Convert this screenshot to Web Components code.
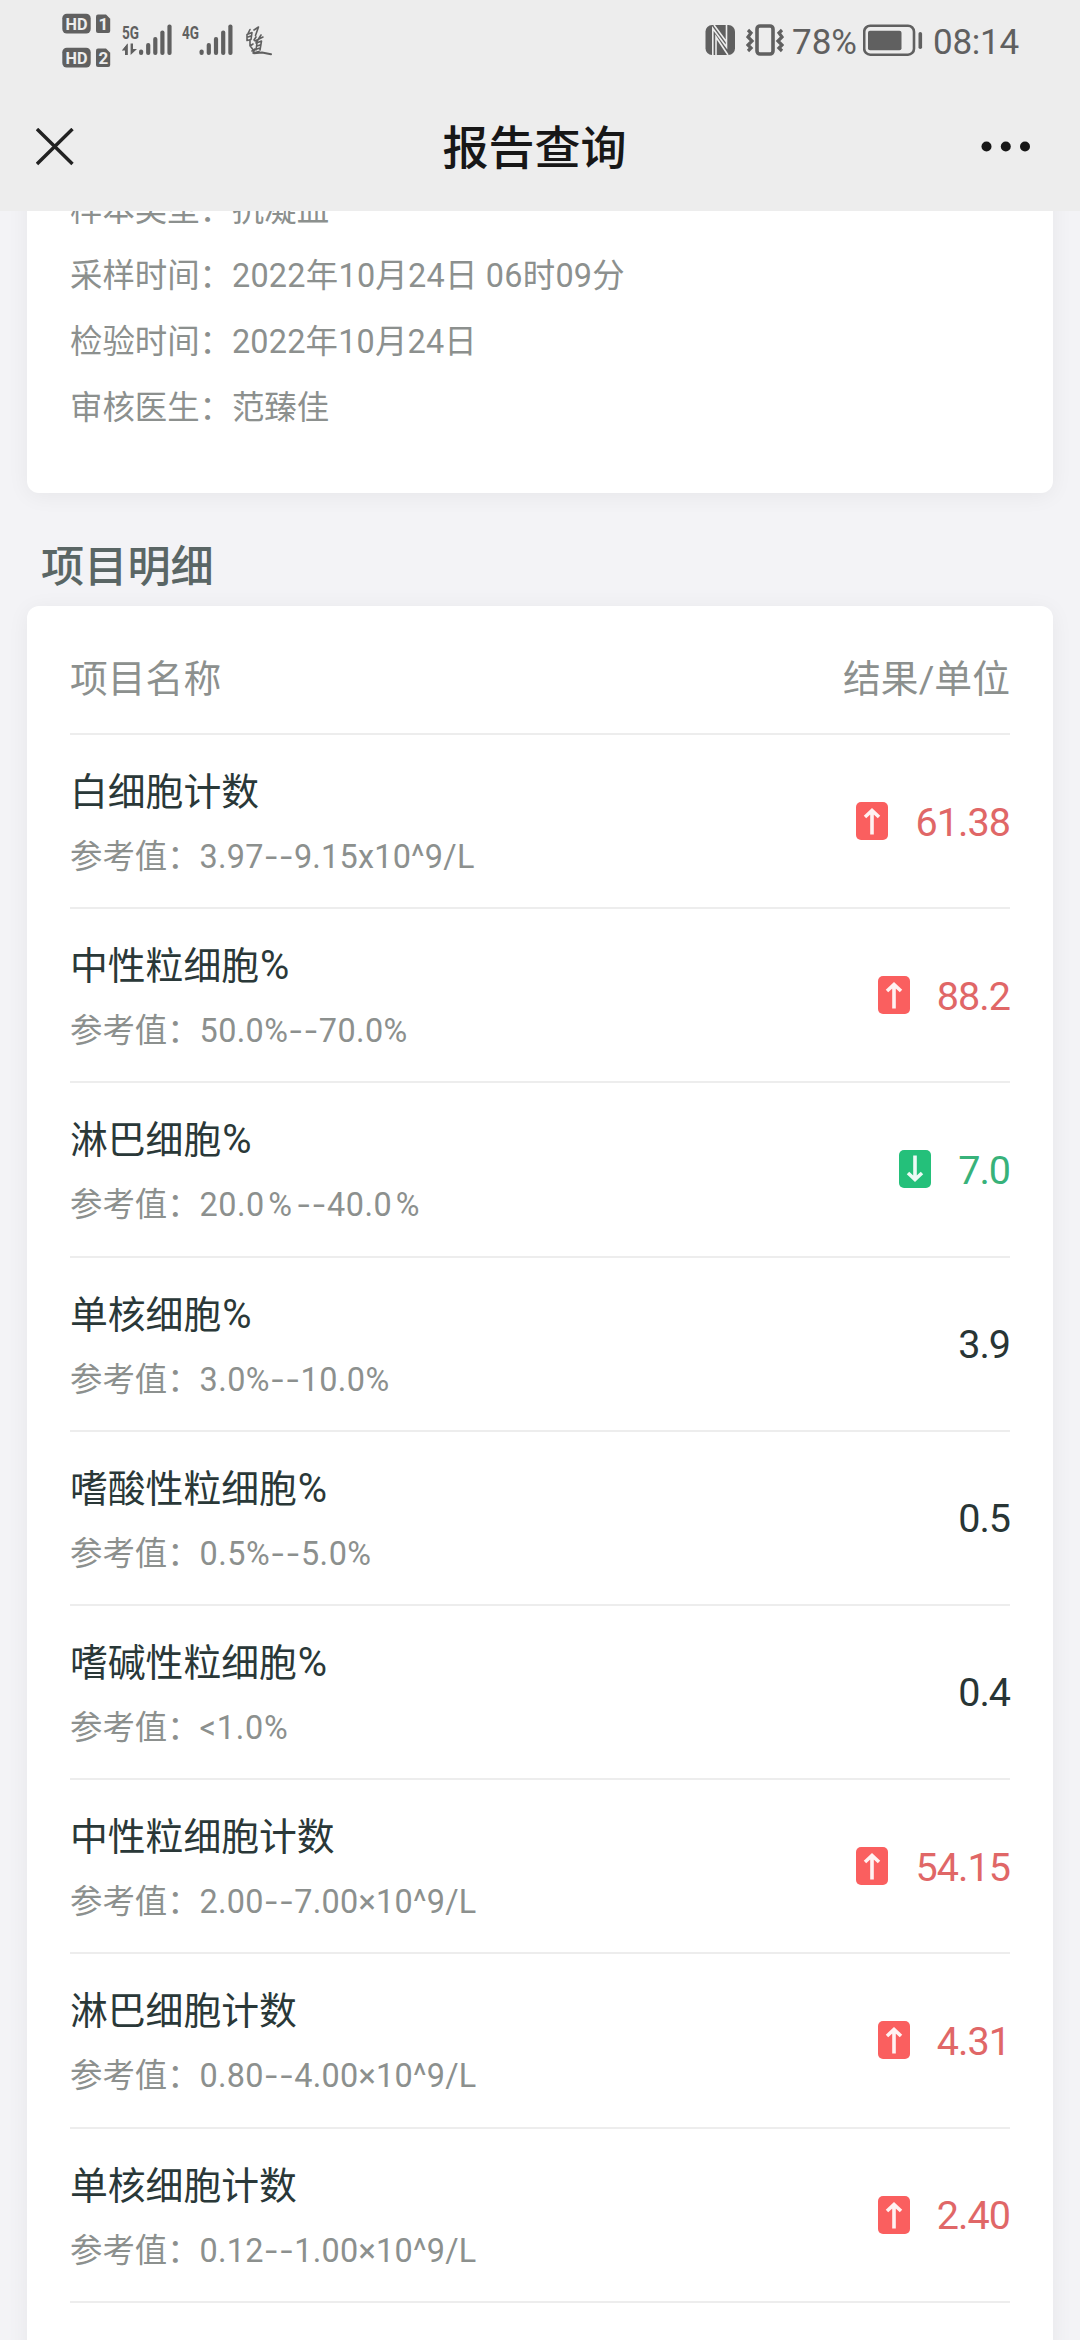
<!DOCTYPE html>
<html lang="zh-CN">
<head>
<meta charset="utf-8">
<title>报告查询</title>
<style>
html,body{margin:0;padding:0}
body{width:1080px;height:2340px;overflow:hidden;background:#f3f3f6;font-family:Roboto,"Noto Sans CJK SC",sans-serif}
</style>
</head>
<body>
<report-app></report-app>
<script>
const define = (name, html, setup) => customElements.define(name, class extends HTMLElement {
  connectedCallback() {
    if (this.shadowRoot) return;
    const root = this.attachShadow({mode: 'open'});
    root.innerHTML = html;
    if (setup) setup(this, root);
  }
});

/* Text tracked so that it occupies the width given by "w" */
define('fit-text', `<style>
:host{display:inline-block;white-space:pre;vertical-align:baseline}
.d{font-family:Inter,sans-serif}
.p{padding:0 3.5px}
</style><span id="t"></span>`, (el, root) => {
  const t = root.getElementById('t');
  const wide = el.hasAttribute('wide');
  (el.getAttribute('text') || '').split(/(--)/).forEach(part => {
    (wide ? part.split(/(%)/) : [part]).forEach(p => {
      if (!p) return;
      const s = document.createElement('span');
      s.textContent = p;
      if (p === '--') s.className = 'd';
      if (wide && p === '%') s.className = 'p';
      t.append(s);
    });
  });
  const w = parseFloat(el.getAttribute('w'));
  if (w) {
    const n = [...t.textContent].length;
    t.style.letterSpacing = ((w - t.getBoundingClientRect().width) / n) + 'px';
  }
});

define('sim-badges', `<style>
:host{display:block;width:50px;height:56px}svg{display:block}
text{font-family:Roboto,sans-serif;font-weight:700;fill:#ededed}
</style><svg width="50" height="56" viewBox="62 13 50 56">
<g id="a"><rect x="62.3" y="13.7" width="28.4" height="19.8" rx="4.5" fill="#606060"/>
<path d="M98 14.500h8l4.200 4.200V31a2 2 0 0 1-2 2H98a2 2 0 0 1-2-2V16.500a2 2 0 0 1 2-2z" fill="#606060"/>
<text x="65.600" y="29.700" font-size="17" textLength="22" lengthAdjust="spacingAndGlyphs">HD</text></g>
<use href="#a" y="34"/>
<text x="98.500" y="29.800" font-size="17">1</text><text x="98.500" y="63.800" font-size="17">2</text>
</svg>`);

define('signal-bars', `<style>
:host{display:block;height:36px}svg{display:block}
text{font-family:Roboto,sans-serif;font-weight:700;fill:#606060}
</style><svg height="36"></svg>`, (el, root) => {
  const s = root.querySelector('svg'), x = +el.getAttribute('bars'), step = +el.getAttribute('step');
  s.setAttribute('width', el.getAttribute('width'));
  let h = `<text x="0" y="16.500" font-size="19" textLength="17" lengthAdjust="spacingAndGlyphs">${el.getAttribute('label')}</text>`;
  [27.5, 21, 15, 8.5, 2.5].forEach((y, i) =>
    h += `<rect x="${x + i * step - 2}" y="${y}" width="4.200" height="${33 - y}" rx="2" fill="#606060"/>`);
  if (el.hasAttribute('data')) h += '<path d="M0 28.500h3v4.500h2.600V21.500z" fill="#606060"/><path d="M0 28.500L5.600 21.500V33H3.200v-5.500zM8.600 21.500H11v5.500h4L8.600 33z" fill="#606060"/>';
  s.innerHTML = h;
});

define('status-bar', `<style>
:host{display:flex;height:80px;box-sizing:border-box;justify-content:space-between;padding:0 61px 0 62px;color:#606060}
.l,.r{display:flex;align-items:flex-start}
.l sim-badges{margin-top:13px}
.l signal-bars,.l svg{margin-top:22px}
.r{font-size:35px;line-height:40px;padding-top:22px}
.r fit-text{margin-top:1px}
svg{display:block;flex:none}
</style>
<div class="l"><sim-badges style="margin-right:10px"></sim-badges>
<signal-bars label="5G" bars="19" step="7.100" width="60" data></signal-bars>
<signal-bars label="4G" bars="19.500" step="7.200" width="62"></signal-bars>
<svg width="30" height="36" viewBox="244 22 30 36" fill="none" stroke="#606060" stroke-width="1.600" stroke-linecap="round" stroke-linejoin="round"><path d="M250 29.500l-2 4M247 34.500l5-2-1 7-4 1zM248 37l3-1M250 40v6l3-2M254 30l4.500-3-3 8.500M256 37l-2 3M255 41l8-4M261 35l-5 8M256.500 43l5-2-1.500 9M257 43l-1 7M257 46l3-1M257 49l3-1M251 47l1.500 2M252 51l3-2-2 4 6-1.500"/><path d="M254 53.200l8-.700 9 1.700" stroke-width="2"/></svg></div>
<div class="r">
<svg width="30" height="36" viewBox="704 22 30 36" style="margin-right:11px"><rect x="704.500" y="25" width="29.500" height="30" rx="6.500" fill="#606060"/><path d="M711.800 55V28.500L725.500 47V25M713 25L725.500 42M715 55V37l12 18" fill="none" stroke="#ededed" stroke-width="1.600"/></svg>
<svg width="38" height="36" viewBox="745 22 38 36" style="margin-right:8px" fill="none" stroke="#606060"><rect x="756" y="26" width="16" height="28" rx="3" stroke-width="3.600"/><path d="M747 30l3 3-3 4 4 4-4 4 3 3-3 3M781 30l-3 3 3 4-4 4 4 4-3 3 3 3" stroke-width="3.200"/></svg>
<fit-text text="78%" w="65" style="width:71px"></fit-text>
<svg width="60" height="36" viewBox="862 22 60 36" style="margin-right:10px"><rect x="863.200" y="25.700" width="49.800" height="29" rx="6" fill="none" stroke="#606060" stroke-width="2.600"/><rect x="867" y="30.800" width="33.500" height="19.500" rx="2" fill="#606060"/><rect x="917.500" y="32" width="3.600" height="17" rx="1.800" fill="#606060"/></svg>
<fit-text text="08:14" w="86"></fit-text>
</div>`);

define('nav-bar', `<style>
:host{display:flex;height:131px;box-sizing:border-box;padding:0 49px 0 36px;justify-content:space-between;align-items:flex-start}
h1{margin:34px 0 0 14px;font-size:46px;line-height:68px;font-weight:500;color:#171717}
svg{display:block;margin-top:48px}
</style>
<svg width="38" height="38" fill="none" stroke="#222" stroke-width="3.400"><path d="M1 1L36.500 36M36.500 1L1 36"/></svg>
<h1><slot></slot></h1>
<svg width="50" height="38" fill="#171717"><circle cx="5.500" cy="18.500" r="5"/><circle cx="24.800" cy="18.500" r="5"/><circle cx="44" cy="18.500" r="5"/></svg>`);

define('info-line', `<style>
:host{display:flex;height:66px;line-height:66px;font-size:32.400px;color:#8c908e;white-space:nowrap}
</style><span id="l"></span>`, (el, root) => {
  root.getElementById('l').textContent = el.getAttribute('label');
  const f = document.createElement('fit-text');
  f.setAttribute('text', el.getAttribute('value'));
  if (el.hasAttribute('w')) f.setAttribute('w', el.getAttribute('w'));
  root.append(f);
});

define('white-card', `<style>
:host{display:block;margin:0 27px;padding:0 43px;background:#fff;border-radius:12px;box-shadow:0 3px 22px rgba(0,0,0,.055);box-sizing:border-box}
</style><slot></slot>`);

define('level-badge', `<style>
:host{display:block;width:32px;height:38px;margin-right:27px}svg{display:block}
</style><svg width="32" height="38"><rect width="32" height="38" rx="5" fill="#fa5f5f"/><path d="M16 32.500V9.500M9 15L16 8.500l7 6.500" fill="none" stroke="#fff" stroke-opacity=".92" stroke-width="3.600"/></svg>`, (el, root) => {
  if (el.getAttribute('level') === 'down') {
    root.querySelector('rect').setAttribute('fill', '#24c07a');
    root.querySelector('path').setAttribute('transform', 'rotate(180 16 19)');
  }
});

define('table-head', `<style>
:host{display:flex;justify-content:space-between;height:129px;box-sizing:border-box;padding-top:45px;border-bottom:2px solid #ededed;font-size:37.800px;line-height:56px;color:#8c908e}
</style><slot></slot>`);

define('result-row', `<style>
:host{display:flex;justify-content:space-between;height:174.200px;box-sizing:border-box;border-bottom:2px solid #ededed;white-space:nowrap}
.n{margin-top:29px;height:56px;line-height:56px;font-size:37.800px;color:#2a3838}
.f{margin-top:13px;height:48px;line-height:48px;font-size:32.400px;color:#8c908e;display:flex}
.v{display:flex;align-items:center;height:172px;font-size:39.500px;color:#283535}
.v fit-text{margin-top:2px}
.up{color:#e06767}.down{color:#38b27a}
</style><div><div class="n"></div><div class="f">参考值：</div></div><div class="v"></div>`, (el, root) => {
  const a = k => el.getAttribute(k), v = root.querySelector('.v');
  const fit = (text, w) => {
    const f = document.createElement('fit-text');
    f.setAttribute('text', text);
    if (w) f.setAttribute('w', w);
    return f;
  };
  const name = a('name');
  root.querySelector('.n').append(name.replace('%', ''));
  if (name.endsWith('%')) {
    const pct = fit('%', 0);
    pct.style.cssText = 'font-size:40px;margin-left:1px';
    root.querySelector('.n').append(pct);
  }
  const r = fit(a('range'), a('w'));
  if (el.hasAttribute('wide')) r.setAttribute('wide', '');
  root.querySelector('.f').append(r);
  if (a('level')) {
    v.classList.add(a('level'));
    const b = document.createElement('level-badge');
    b.setAttribute('level', a('level'));
    v.append(b);
  }
  const digits = a('value').length - 1;
  v.append(fit(a('value'), digits * 21.4 + 9));
});

define('report-app', `<style>
:host{display:flex;flex-direction:column;width:1080px;height:2340px;overflow:hidden;background:#f3f3f6}
header{background:#ededed;height:211px;flex:none;z-index:1}
main{flex:1;min-height:0;overflow:hidden}
.info{margin-top:-47px;height:329px;padding-top:13px}
h2{margin:43px 0 0 41px;height:64px;line-height:64px;padding-bottom:6px;font-size:43.200px;font-weight:500;color:#5a6665}
.list{height:1800px}
</style>
<header><status-bar></status-bar><nav-bar>报告查询</nav-bar></header>
<main>
<white-card class="info">
<info-line label="样本类型：" value="抗凝血"></info-line>
<info-line label="采样时间：" value="2022年10月24日 06时09分" w="393"></info-line>
<info-line label="检验时间：" value="2022年10月24日" w="245"></info-line>
<info-line label="审核医生：" value="范臻佳"></info-line>
</white-card>
<h2>项目明细</h2>
<white-card class="list">
<table-head><span>项目名称</span><fit-text text="结果/单位" w="167"></fit-text></table-head>
<result-row name="白细胞计数" range="3.97--9.15x10^9/L" w="275" value="61.38" level="up"></result-row>
<result-row name="中性粒细胞%" range="50.0%--70.0%" w="208" value="88.2" level="up"></result-row>
<result-row name="淋巴细胞%" range="20.0%--40.0%" w="224" wide value="7.0" level="down"></result-row>
<result-row name="单核细胞%" range="3.0%--10.0%" w="190" value="3.9"></result-row>
<result-row name="嗜酸性粒细胞%" range="0.5%--5.0%" w="172" value="0.5"></result-row>
<result-row name="嗜碱性粒细胞%" range="&lt;1.0%" w="89" value="0.4"></result-row>
<result-row name="中性粒细胞计数" range="2.00--7.00×10^9/L" w="277" value="54.15" level="up"></result-row>
<result-row name="淋巴细胞计数" range="0.80--4.00×10^9/L" w="277" value="4.31" level="up"></result-row>
<result-row name="单核细胞计数" range="0.12--1.00×10^9/L" w="277" value="2.40" level="up"></result-row>
</white-card>
</main>`);
</script>
</body>
</html>
